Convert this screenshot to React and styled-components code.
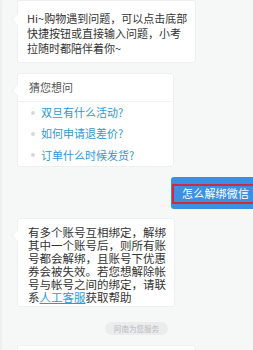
import React from "react";
import styled, { createGlobalStyle } from "styled-components";

const GlobalStyle = createGlobalStyle`
  html, body {
    margin: 0;
    padding: 0;
    background: #f6f7f7;
    overflow: hidden;
  }
  body {
    font-family: "Noto Sans CJK SC", "Noto Sans", sans-serif;
  }
`;

const Chat = styled.div`
  display: flex;
  flex-direction: column;
  align-items: flex-start;
  width: 253px;
  height: 350px;
  overflow: hidden;
  padding-left: 17px;
  box-sizing: border-box;
  box-shadow: inset 3px 0 3px -2px rgba(0, 0, 0, 0.06);
  & > * {
    flex-shrink: 0;
  }
`;

const Bubble = styled.div`
  position: relative;
  box-sizing: border-box;
  width: ${(p) => p.width}px;
  min-height: ${(p) => p.minH || 0}px;
  margin-top: ${(p) => p.gap || 0}px;
  background: #fff;
  border: 1px solid #eeeff0;
  border-radius: 3px;
  color: #333;
  white-space: nowrap;
  font-size: ${(p) => p.size || 11}px;
  line-height: ${(p) => p.lh || 15}px;
  padding: ${(p) => p.pad || "0"};
  &::before {
    content: "";
    position: absolute;
    left: -5px;
    top: ${(p) => p.tail || 14}px;
    width: 8px;
    height: 8px;
    background: #fff;
    border-left: 1px solid #eeeff0;
    border-bottom: 1px solid #eeeff0;
    transform: rotate(45deg);
  }
`;

const Header = styled.div`
  height: 27px;
  display: flex;
  align-items: center;
  padding-left: 11px;
  color: #555;
  font-size: 11px;
  border-bottom: 1px solid #f0f1f2;
`;

const List = styled.ul`
  list-style: none;
  margin: 0;
  padding: 0;
`;

const Item = styled.li`
  display: flex;
  align-items: center;
  height: 21.3px;
  padding-left: 13px;
  gap: 6px;
  color: #3097d1;
  font-size: 11px;
  &::before {
    content: "";
    width: 4px;
    height: 4px;
    border-radius: 50%;
    background: #d6d8da;
  }
`;

const UserRow = styled.div`
  align-self: stretch;
  display: flex;
  justify-content: flex-end;
  margin-top: 10px;
  margin-right: -12px;
`;

const UserBubble = styled.div`
  position: relative;
  width: 94px;
  height: 32px;
  box-sizing: border-box;
  display: flex;
  align-items: center;
  padding-left: 11px;
  background: #3c90df;
  border-radius: 3px;
  color: #fff;
  font-size: 11px;
  letter-spacing: 0.2px;
  white-space: nowrap;
`;

const Highlight = styled.div`
  position: absolute;
  left: 1px;
  top: 7px;
  bottom: 5px;
  right: 0;
  border: 2px solid #cf2a3e;
`;

const Link = styled.span`
  color: #2b9ad8;
  text-decoration: underline;
`;

const PillRow = styled.div`
  align-self: stretch;
  display: flex;
  padding-left: 88px;
  margin-top: 15px;
`;

const Pill = styled.div`
  width: 63px;
  height: 13px;
  border-radius: 7px;
  background: #ebeced;
  color: #b8bbbe;
  font-size: 7.5px;
  white-space: nowrap;
  display: flex;
  align-items: center;
  justify-content: center;
`;

export default function App() {
  return (
    <>
      <GlobalStyle />
      <Chat>
        <Bubble width={179} pad="10px 8px 6px 9px" tail={14}>
          Hi~购物遇到问题，可以点击底部
          <br />
          快捷按钮或直接输入问题，小考
          <br />
          拉随时都陪伴着你~
        </Bubble>
        <Bubble width={157} gap={10} tail={12}>
          <Header>猜您想问</Header>
          <List>
            <Item>双旦有什么活动?</Item>
            <Item>如何申请退差价?</Item>
            <Item>订单什么时候发货?</Item>
          </List>
        </Bubble>
        <UserRow>
          <UserBubble>
            怎么解绑微信
            <Highlight />
          </UserBubble>
        </UserRow>
        <Bubble width={158} gap={9} size={11.5} lh={13} pad="7px 6px 2px 10px" tail={12}>
          有多个账号互相绑定，解绑
          <br />
          其中一个账号后，则所有账
          <br />
          号都会解绑，且账号下优惠
          <br />
          券会被失效。若您想解除帐
          <br />
          号与帐号之间的绑定，请联
          <br />
          系<Link>人工客服</Link>获取帮助
        </Bubble>
        <PillRow>
          <Pill>阿南为您服务</Pill>
        </PillRow>
        <Bubble width={179} gap={10} minH={40} tail={14} />
      </Chat>
    </>
  );
}
